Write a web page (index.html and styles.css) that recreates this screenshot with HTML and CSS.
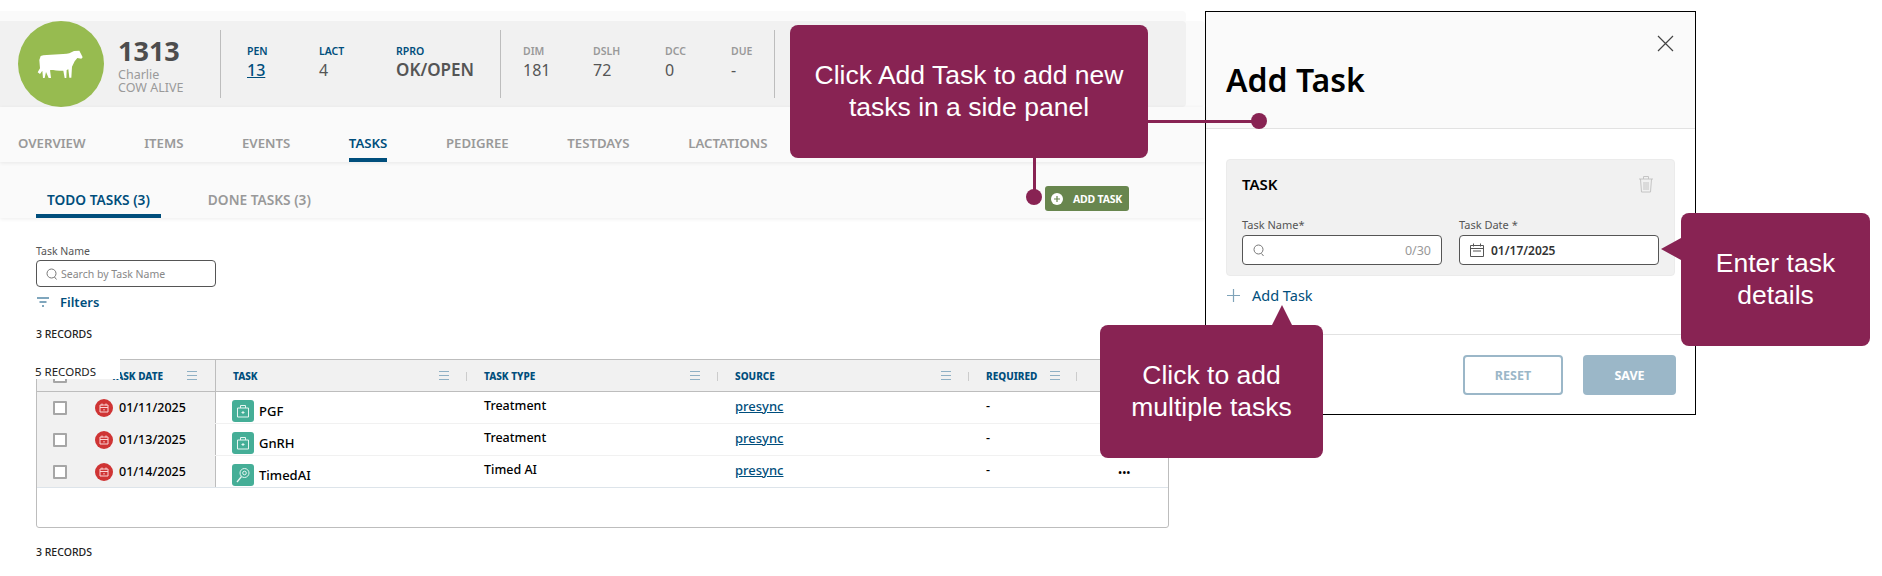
FILE: index.html
```html
<!DOCTYPE html>
<html lang="en">
<head>
    <meta charset="UTF-8">
    <title>Add Task</title>
    <link rel="stylesheet" href="styles.css">
</head>
<body>
<div class="stage">
    <div class="app">
        <div class="cow-card">
            <div class="avatar">
                <svg viewBox="54 63 258 258" width="86" height="86"><path fill="#fff" d="M122 168C140 162 190 165 208 160L222 153 238 152 242 160 248 172 244 176 232 174 224 184 216 200 214 233 208 233 205 208 200 210 199 234 194 234 190 212C175 212 160 212 150 210L153 234 146 234 138 216 134 234 129 234 127 212 120 222 113 217 120 205 118 180Z"/></svg>
            </div>
            <div class="cow-name">
                <div class="cow-id">1313</div>
                <div class="cow-sub">Charlie</div>
                <div class="cow-sub">COW ALIVE</div>
            </div>
            <div class="stats stats-main">
                <div class="stat"><span class="stat-label">PEN</span><a class="stat-value stat-link">13</a></div>
                <div class="stat"><span class="stat-label">LACT</span><span class="stat-value">4</span></div>
                <div class="stat"><span class="stat-label">RPRO</span><span class="stat-value stat-strong">OK/OPEN</span></div>
            </div>
            <div class="stats stats-more">
                <div class="stat"><span class="stat-label">DIM</span><span class="stat-value">181</span></div>
                <div class="stat"><span class="stat-label">DSLH</span><span class="stat-value">72</span></div>
                <div class="stat"><span class="stat-label">DCC</span><span class="stat-value">0</span></div>
                <div class="stat"><span class="stat-label">DUE</span><span class="stat-value">-</span></div>
            </div>
            <div class="stats-end"></div>
        </div>

        <div class="tabs">
            <span class="tab">OVERVIEW</span>
            <span class="tab">ITEMS</span>
            <span class="tab">EVENTS</span>
            <span class="tab active">TASKS</span>
            <span class="tab">PEDIGREE</span>
            <span class="tab">TESTDAYS</span>
            <span class="tab">LACTATIONS</span>
        </div>

        <div class="subtabs">
            <span class="subtab active">TODO TASKS (3)</span>
            <span class="subtab">DONE TASKS (3)</span>
            <button class="add-btn">
                <svg viewBox="0 0 12 12" width="12" height="12"><circle cx="6" cy="6" r="6" fill="#fff"/><path d="M6 3v6M3 6h6" stroke="#68864e" stroke-width="1.2"/></svg>
                ADD TASK
            </button>
        </div>

        <div class="content">
            <label class="field-label">Task Name</label>
            <div class="search">
                <svg viewBox="0 0 12 12" width="12" height="12"><circle cx="5.500" cy="5.500" r="4.500" fill="none" stroke="#777"/><path d="M8.500 9l2 2.500" stroke="#777"/></svg>
                <span>Search by Task Name</span>
            </div>
            <div class="filters">
                <svg viewBox="0 0 12 10" width="12" height="10"><path d="M0 1h12M2.500 5h7M5 9h2" stroke="#004e7c" stroke-width="1.2"/></svg>
                Filters
            </div>
            <div class="records">3 RECORDS</div>

            <div class="grid">
                <div class="row head">
                    <div class="cell pinned"><i class="check"></i>TASK DATE<i class="menu"></i></div>
                    <div class="cell">TASK<i class="menu"></i><i class="sep"></i></div>
                    <div class="cell">TASK TYPE<i class="menu"></i><i class="sep"></i></div>
                    <div class="cell">SOURCE<i class="menu"></i><i class="sep"></i></div>
                    <div class="cell">REQUIRED<i class="menu menu-near"></i><i class="sep"></i></div>
                    <div class="cell"></div>
                </div>
                <div class="row">
                    <div class="cell pinned"><i class="check"></i>
                        <svg class="due" viewBox="0 0 18 18" width="18" height="18"><circle cx="9" cy="9" r="9" fill="#cf3434"/><path d="M5 6h8v7H5zM5 8.500h8M7 4.500v2M11 4.500v2M9 10v1.500" fill="none" stroke="#fbd5d5"/></svg>
                        01/11/2025</div>
                    <div class="cell task-name">
                        <svg class="kind" viewBox="0 0 22 22" width="22" height="22"><rect width="22" height="22" rx="3" fill="#45ae97"/><path d="M5.500 8h11v9h-11zM8.500 8V5.500h5V8M11 11v3M9.500 12.500h3" fill="none" stroke="#e6f5f1"/></svg>
                        PGF</div>
                    <div class="cell up">Treatment</div>
                    <div class="cell up"><a class="link">presync</a></div>
                    <div class="cell up">-</div>
                    <div class="cell"></div>
                </div>
                <div class="row">
                    <div class="cell pinned"><i class="check"></i>
                        <svg class="due" viewBox="0 0 18 18" width="18" height="18"><circle cx="9" cy="9" r="9" fill="#cf3434"/><path d="M5 6h8v7H5zM5 8.500h8M7 4.500v2M11 4.500v2M9 10v1.500" fill="none" stroke="#fbd5d5"/></svg>
                        01/13/2025</div>
                    <div class="cell task-name">
                        <svg class="kind" viewBox="0 0 22 22" width="22" height="22"><rect width="22" height="22" rx="3" fill="#45ae97"/><path d="M5.500 8h11v9h-11zM8.500 8V5.500h5V8M11 11v3M9.500 12.500h3" fill="none" stroke="#e6f5f1"/></svg>
                        GnRH</div>
                    <div class="cell up">Treatment</div>
                    <div class="cell up"><a class="link">presync</a></div>
                    <div class="cell up">-</div>
                    <div class="cell"></div>
                </div>
                <div class="row">
                    <div class="cell pinned"><i class="check"></i>
                        <svg class="due" viewBox="0 0 18 18" width="18" height="18"><circle cx="9" cy="9" r="9" fill="#cf3434"/><path d="M5 6h8v7H5zM5 8.500h8M7 4.500v2M11 4.500v2M9 10v1.500" fill="none" stroke="#fbd5d5"/></svg>
                        01/14/2025</div>
                    <div class="cell task-name">
                        <svg class="kind" viewBox="0 0 22 22" width="22" height="22"><rect width="22" height="22" rx="3" fill="#45ae97"/><circle cx="12.500" cy="9" r="4.500" fill="none" stroke="#e6f5f1"/><circle cx="12.500" cy="9" r="1.800" fill="none" stroke="#e6f5f1"/><path d="M9.500 12.500L5 18" stroke="#e6f5f1" stroke-width="1.300"/></svg>
                        TimedAI</div>
                    <div class="cell up">Timed AI</div>
                    <div class="cell up"><a class="link">presync</a></div>
                    <div class="cell up">-</div>
                    <div class="cell dots">&bull;&bull;&bull;</div>
                </div>
            </div>
            <div class="records records-bottom">3 RECORDS</div>
        </div>
    </div>

    <div class="panel">
        <div class="panel-head">
            <svg class="close" viewBox="0 0 17 17" width="17" height="17"><path d="M1 1l15 15M16 1L1 16" stroke="#444" stroke-width="1.200"/></svg>
            <h1 class="panel-title">Add Task</h1>
        </div>
        <div class="panel-body">
            <div class="task-card">
                <div class="task-card-top">
                    <span>TASK</span>
                    <svg viewBox="0 0 16 18" width="16" height="18"><path d="M1 4h14M5.500 4V1.500h5V4M2.500 4l1 13h9l1-13M6 7v8M8 7v8M10 7v8" fill="none" stroke="#c4c4c4"/></svg>
                </div>
                <div class="task-fields">
                    <div>
                        <label class="field-label">Task Name*</label>
                        <div class="input">
                            <svg viewBox="0 0 12 13" width="12" height="13"><circle cx="5.500" cy="5.500" r="4.500" fill="none" stroke="#777"/><path d="M8.500 9.500l2 2.500" stroke="#777"/></svg>
                            <span class="counter">0/30</span>
                        </div>
                    </div>
                    <div>
                        <label class="field-label">Task Date *</label>
                        <div class="input">
                            <svg viewBox="0 0 14 14" width="14" height="14"><path d="M.5 2.500h13v11H.5zM.5 5.500h13M3.500.5v3M10.500.5v3M3 8h8" fill="none" stroke="#555"/></svg>
                            <span class="date-value">01/17/2025</span>
                        </div>
                    </div>
                </div>
            </div>
            <div class="add-more">
                <svg viewBox="0 0 13 13" width="13" height="13"><path d="M6.500 0v13M0 6.500h13" stroke="#7fa3b9" stroke-width="1.200"/></svg>
                Add Task
            </div>
        </div>
        <div class="panel-foot">
            <button class="btn btn-reset">RESET</button>
            <button class="btn btn-save">SAVE</button>
        </div>
    </div>

    <div class="records-float">5 RECORDS</div>

    <div class="callout callout-add">Click Add Task to add new<br>tasks in a side panel</div>
    <i class="line line-panel"></i>
    <i class="dot dot-panel"></i>
    <i class="line line-btn"></i>
    <i class="dot dot-btn"></i>

    <div class="callout callout-multi">Click to add<br>multiple tasks</div>
    <div class="callout callout-details">Enter task<br>details</div>
</div>
</body>
</html>
```

FILE: styles.css
```css
* {
    box-sizing: border-box;
}
body {
    margin: 0;
    background: white;
    font-family: "Noto Sans", sans-serif;
    color: #000;
}
.stage {
    position: relative;
    display: flex;
    align-items: flex-start;
    width: 1882px;
    height: 576px;
    overflow: hidden;
    padding-top: 11px;
}
.app {
    width: 1205px;
    flex: none;
}

/* cow header */
.cow-card {
    display: flex;
    width: 1186px;
    height: 86px;
    margin-top: 10px;
    background: #f1f1f1;
    border-radius: 0 4px 4px 0;
    box-shadow: 0 -10px 0 #fafafa, 19px 0 0 #fafafa;
}
.avatar {
    width: 86px;
    height: 86px;
    margin-left: 18px;
    border-radius: 50%;
    background: #97bb50;
    flex: none;
}
.cow-name {
    width: 116px;
    padding: 15px 0 0 14px;
    flex: none;
}
.cow-id {
    font-size: 27px;
    line-height: 30px;
    font-weight: 700;
    color: #4d4d4d;
    margin-bottom: 2px;
}
.cow-sub {
    font-size: 12.500px;
    line-height: 13px;
    color: #9a9a9a;
}
.stats {
    display: grid;
    align-content: start;
    height: 68px;
    margin-top: 9px;
    padding-top: 14px;
    border-left: 1px solid #bdbdbd;
}
.stats-main {
    grid-template-columns: 72px 77px auto;
    width: 280px;
    padding-left: 26px;
}
.stats-more {
    grid-template-columns: 70px 72px 66px auto;
    width: 274px;
    padding-left: 22px;
}
.stats-more .stat-label {
    color: #999;
}
.stats-end {
    height: 68px;
    margin-top: 9px;
    border-left: 1px solid #bdbdbd;
}
.stat {
    display: flex;
    flex-direction: column;
}
.stat-label {
    font-size: 10.500px;
    line-height: 14px;
    font-weight: 600;
    color: #004e7c;
}
.stat-value {
    font-size: 16px;
    line-height: 24px;
    color: #555;
}
.stat-strong {
    font-size: 17px;
    font-weight: 600;
}
.stat-link {
    color: #004e7c;
    text-decoration: underline;
    font-weight: 500;
}

/* tabs */
.tabs {
    display: flex;
    gap: 58.600px;
    align-items: flex-end;
    height: 55px;
    padding-left: 18px;
    background: #fafafa;
    box-shadow: 0 1px 4px rgba(0,0,0,0.08);
    position: relative;
}
.tab {
    height: 28px;
    font-size: 13.200px;
    line-height: 19px;
    font-weight: 600;
    color: #999;
}
.tab.active {
    color: #004e7c;
    border-bottom: 4px solid #004e7c;
}
.subtabs {
    display: flex;
    align-items: flex-end;
    height: 56px;
    padding-left: 36px;
    background: #fafafa;
    box-shadow: 0 1px 4px rgba(0,0,0,0.08);
}
.subtab {
    height: 28px;
    margin-right: 36px;
    padding: 0 11px;
    font-size: 13.700px;
    line-height: 20px;
    font-weight: 600;
    color: #999;
}
.subtab.active {
    margin-right: 36px;
    color: #004e7c;
    border-bottom: 4px solid #004e7c;
}
.add-btn {
    display: flex;
    align-items: center;
    gap: 10px;
    width: 84px;
    height: 25px;
    margin: 0 76px 7px auto;
    padding: 0 0 0 6px;
    border: none;
    border-radius: 3px;
    background: #68864e;
    color: white;
    font-family: inherit;
    font-size: 10.500px;
    font-weight: 700;
    letter-spacing: -0.2px;
    white-space: nowrap;
}

/* list */
.content {
    padding: 26px 0 0 36px;
}
.field-label {
    display: block;
    font-size: 10.500px;
    line-height: 14px;
    color: #555;
}
.search {
    display: flex;
    align-items: center;
    gap: 3px;
    width: 180px;
    height: 27px;
    margin-top: 2px;
    padding-left: 9px;
    border: 1px solid #555;
    border-radius: 4px;
    font-size: 10.500px;
    color: #888;
}
.filters {
    display: flex;
    align-items: center;
    gap: 11px;
    height: 20px;
    margin-top: 5px;
    padding-left: 1px;
    font-size: 13px;
    font-weight: 600;
    color: #004e7c;
}
.records {
    margin-top: 15px;
    font-size: 10.500px;
    line-height: 14px;
    font-weight: 500;
    color: #222;
}
.records-bottom {
    margin-top: 17px;
}
.records-float {
    position: absolute;
    left: 0;
    top: 359px;
    width: 120px;
    height: 20px;
    padding-left: 35px;
    background: white;
    font-size: 11.500px;
    line-height: 26px;
    color: #222;
    overflow: hidden;
}
.grid {
    width: 1133px;
    height: 169px;
    margin-top: 18px;
    border: 1px solid #bdbdbd;
    border-radius: 0 0 3px 3px;
}
.row {
    display: grid;
    grid-template-columns: 179px 251px 251px 251px 108px auto;
    height: 32px;
    border-bottom: 1px solid #f1f1f1;
    font-size: 12.500px;
    font-weight: 500;
}
.row:last-child {
    border-bottom-color: #dde4ea;
}
.row.head {
    height: 32px;
    background: #f1f1f1;
    border-bottom: 1px solid #bdbdbd;
    font-size: 10px;
    font-weight: 800;
    color: #004e7c;
}
.cell {
    position: relative;
    display: flex;
    align-items: center;
    padding-left: 17px;
}
.up {
    padding-bottom: 4px;
}
.pinned {
    padding-left: 16px;
    background: #f1f1f1;
    border-right: 1px solid #bdbdbd;
}
.menu {
    position: absolute;
    right: 18px;
    top: 11px;
    width: 10px;
    height: 9px;
    border-top: 1px solid #8fb0c4;
    border-bottom: 1px solid #8fb0c4;
}
.menu::after {
    content: "";
    display: block;
    margin-top: 3px;
    border-top: 1px solid #8fb0c4;
}
.menu-near {
    right: 17px;
}
.sep {
    position: absolute;
    right: 0;
    top: 12px;
    width: 1px;
    height: 9px;
    background: #ccc;
}
.check {
    width: 14px;
    height: 14px;
    margin-right: 28px;
    background: white;
    border: 2px solid #a6a6a6;
    border-radius: 1px;
    flex: none;
}
.head .check {
    margin-right: 44px;
}
.due {
    margin-right: 6px;
    flex: none;
}
.task-name {
    padding-left: 16px;
    padding-top: 6px;
    font-size: 13px;
}
.kind {
    margin-right: 5px;
    flex: none;
}
.link {
    font-size: 13px;
    color: #004e7c;
    text-decoration: underline;
}
.dots {
    padding-left: 41px;
    font-size: 11px;
    padding-top: 2px;
}

/* side panel */
.panel {
    display: flex;
    flex-direction: column;
    width: 491px;
    height: 404px;
    border: 1px solid #000;
    background: white;
    flex: none;
}
.panel-head {
    display: flex;
    flex-direction: column;
    height: 117px;
    background: #fafafa;
    border-bottom: 1px solid #e2e2e2;
}
.close {
    align-self: flex-end;
    margin: 23px 21px 0 0;
}
.panel-title {
    margin: 8px 0 0 20px;
    font-size: 32px;
    line-height: 40px;
    font-weight: 600;
}
.panel-body {
    flex: 1;
    padding: 30px 20px 0;
}
.task-card {
    height: 117px;
    padding: 14px 16px 14px 15px;
    background: #f1f1f1;
    border: 1px solid #ebebeb;
    border-radius: 4px;
}
.task-card-top {
    display: flex;
    justify-content: space-between;
    align-items: center;
    height: 20px;
    font-size: 15px;
    font-weight: 600;
    padding-right: 4px;
}
.task-fields {
    display: grid;
    grid-template-columns: 200px 200px;
    gap: 17px;
    margin-top: 24px;
}
.task-fields .field-label {
    font-size: 11px;
}
.input {
    display: flex;
    align-items: center;
    justify-content: space-between;
    height: 30px;
    margin-top: 3px;
    padding: 0 10px;
    background: white;
    border: 1px solid #555;
    border-radius: 4px;
    font-size: 12.500px;
}
.input svg {
    flex: none;
}
.counter {
    color: #999;
}
.date-value {
    flex: 1;
    padding-left: 7px;
    font-size: 12px;
    font-weight: 600;
    color: #333;
}
.add-more {
    display: flex;
    align-items: center;
    gap: 12px;
    height: 22px;
    margin-top: 8px;
    padding-left: 1px;
    font-size: 14.500px;
    font-weight: 400;
    color: #004e7c;
}
.panel-foot {
    display: flex;
    justify-content: flex-end;
    gap: 20px;
    height: 80px;
    padding: 20px 19px 0 0;
    border-top: 1px solid #e2e2e2;
}
.btn {
    height: 40px;
    border-radius: 4px;
    font-family: inherit;
    font-size: 12.500px;
    font-weight: 700;
}
.btn-reset {
    width: 100px;
    background: white;
    border: 2px solid #9bb7c8;
    color: #9bb7c8;
}
.btn-save {
    width: 93px;
    background: #9bb7c8;
    border: none;
    color: white;
}

/* annotations */
.callout {
    position: absolute;
    display: flex;
    align-items: center;
    justify-content: center;
    padding-bottom: 2px;
    background: #882353;
    border-radius: 8px;
    color: white;
    font-family: "Liberation Sans", Arial, sans-serif;
    font-size: 26.500px;
    line-height: 32px;
    text-align: center;
}
.callout-add {
    left: 790px;
    top: 25px;
    width: 358px;
    height: 133px;
}
.callout-multi {
    left: 1100px;
    top: 325px;
    width: 223px;
    height: 133px;
}
.callout-multi::before {
    content: "";
    position: absolute;
    left: 172px;
    top: -20px;
    border: 10px solid transparent;
    border-top: 0;
    border-bottom: 20px solid #882353;
}
.callout-details {
    left: 1681px;
    top: 213px;
    width: 189px;
    height: 133px;
}
.callout-details::before {
    content: "";
    position: absolute;
    left: -20px;
    top: 25px;
    border: 11px solid transparent;
    border-left: 0;
    border-right: 20px solid #882353;
}
.line {
    position: absolute;
    background: #882353;
}
.line-panel {
    left: 1148px;
    top: 120px;
    width: 111px;
    height: 3px;
}
.line-btn {
    left: 1033px;
    top: 158px;
    width: 3px;
    height: 39px;
}
.dot {
    position: absolute;
    width: 16px;
    height: 16px;
    border-radius: 50%;
    background: #882353;
}
.dot-panel {
    left: 1251px;
    top: 113px;
}
.dot-btn {
    left: 1026px;
    top: 189px;
}
```
